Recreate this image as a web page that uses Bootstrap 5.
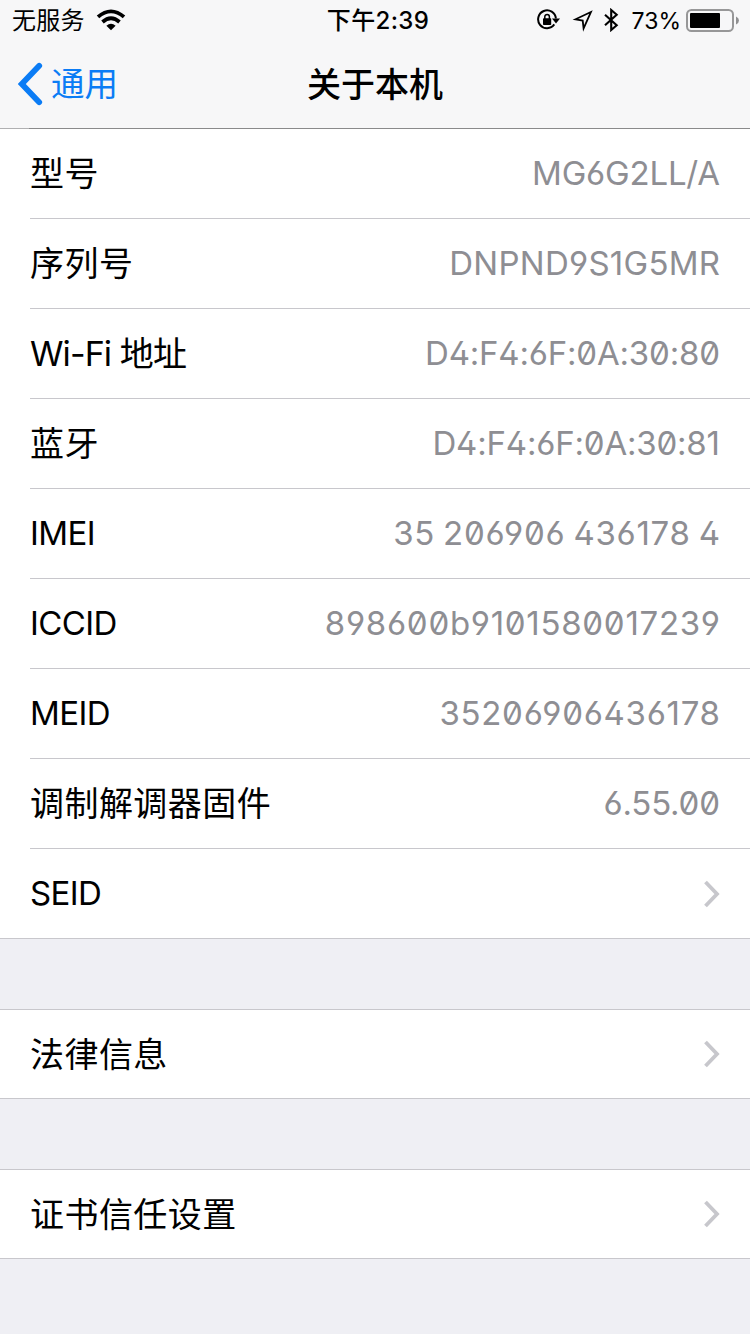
<!DOCTYPE html>
<html lang="zh-CN">
<head>
<meta charset="utf-8">
<meta name="viewport" content="width=device-width, initial-scale=1">
<title>关于本机</title>
<link href="https://cdn.jsdelivr.net/npm/bootstrap@5.3.0/dist/css/bootstrap.min.css" rel="stylesheet">
<style>
  body { background: #efeff4; color: #000; font-family: Inter, "Noto Sans CJK SC", sans-serif; overflow: hidden; }
  .top-area { height: 129px; background: #f7f7f8; border-bottom: 1px solid; border-image: linear-gradient(to right, #b0b0b2 30px, #8a8a8b 30px) 1; }
  .status-bar { height: 40px; font-size: 23px; line-height: 40px; padding: 0 11px 0 12px; }
  .side { flex: 1 1 0; }
  .carrier { font-size: 24px; padding-top: 2px; letter-spacing: .2px; }
  .wifi { margin-left: 11px; }
  .clock { font-size: 24px; letter-spacing: .35px; padding: 2px 0 0 5px; }
  .percent { margin: 1px 5px 0 11px; }
  .title-bar { height: 88px; padding: 0 17px; }
  .back-link { color: #0b7cf5; font-size: 33.5px; line-height: 1; padding-top: 6px; }
  .back-link span { margin-left: 8px; padding-top: 1px; }
  .page-title { font-size: 34px; line-height: 1; font-weight: 500; padding-top: 2px; }
  .group { background: #fff; border-bottom: 1px solid #c8c7cc; padding-left: 30px; --bs-list-group-border-radius: 0; --bs-list-group-bg: #fff; --bs-list-group-color: #000; }
  .group + .group { margin-top: 70px; border-top: 1px solid #c8c7cc; }
  .group + .group .setting { height: 88px; }
  .setting { height: 89px; border: 0; padding: 0 30px 0 0; font-size: 34px; line-height: 90px; }
  .group .setting + .setting { border-top: 1px solid #c8c7cc; height: 90px; }
  .cjk { letter-spacing: .45px; line-height: 90px; }
  .group + .group .cjk { line-height: 89px; }
  .latin { font-size: 33px; letter-spacing: -.6px; line-height: 89px; }
  .mixed { letter-spacing: -.9px; line-height: 89px; }
  .value { font-size: 33px; line-height: 89px; color: #8e8e93; font-feature-settings: "zero", "cv02", "cv03", "cv04"; letter-spacing: var(--track, 0); margin-right: calc(var(--track, 0px) * -1); white-space: nowrap; }
  .track-tight { --track: -.2px; }
  .track-serial { --track: .25px; }
  .track-imei { --track: .7px; word-spacing: -1.9px; }
  .track-digits { --track: .7px; }
  .chevron { margin-top: 30px; }
  .group + .group .chevron { margin-top: 29px; }
</style>
</head>
<body>
<header class="top-area">
  <div class="status-bar d-flex align-items-center">
    <div class="side d-flex align-items-center">
      <span class="carrier">无服务</span>
      <svg class="wifi" width="30" height="22" viewBox="0 0 30 22" fill="none" stroke="#000" stroke-width="3.8"><path d="M2 7.9Q15-3.2 28 7.9M6.5 13Q15 5.6 23.5 13"/><path d="M10.4 16.8Q15 12.6 19.6 16.8L15 21.2Z" fill="#000" stroke="none"/></svg>
    </div>
    <div class="clock fw-medium">下午2:39</div>
    <div class="side d-flex align-items-center justify-content-end">
      <svg width="84" height="24" viewBox="0 0 84 24">
        <g fill="none" stroke="#000">
          <path d="M17.3 16.4A8.9 8.9 0 1 1 18.9 10.5" stroke-width="2"/>
          <path d="M7.8 11V8.7a2.3 2.3 0 0 1 4.6 0V11" stroke-width="1.5"/>
          <path d="M53.9 4L38.5 11.3L45.7 12.6L46.6 20.4Z" stroke-width="1.8"/>
          <path d="M68 6.8L79.7 17.3L74.2 22V2L79.7 6.7L68 17.3" stroke-width="2.1"/>
        </g>
        <rect x="6" y="10.2" width="8.2" height="6.8" rx=".8"/>
        <path d="M15 10.4H23L19 15.4Z"/>
      </svg>
      <span class="percent">73%</span>
      <svg width="53" height="24" viewBox="0 0 53 24"><rect x="1" y="2" width="46" height="21" rx="4.5" fill="none" stroke="#979798" stroke-width="2"/><rect x="4" y="5" width="30" height="15" rx="1"/><path d="M50 8.5Q53 10 53 12.5T50 16.5Z" fill="#8f8f90"/></svg>
    </div>
  </div>
  <nav class="title-bar d-flex align-items-center">
    <div class="side">
      <a class="back-link text-decoration-none d-inline-flex align-items-center" href="#">
        <svg width="26" height="44" viewBox="0 0 26 44" fill="none" stroke="currentColor" stroke-width="5.8" stroke-linecap="round"><path d="M22.2 3.8L4.8 22L22.2 40.2"/></svg>
        <span>通用</span></a>
    </div>
    <h1 class="page-title m-0">关于本机</h1>
    <div class="side"></div>
  </nav>
</header>
<main>
  <section class="group list-group">
    <div class="setting list-group-item d-flex justify-content-between"><span class="cjk">型号</span><span class="value track-tight">MG6G2LL/A</span></div>
    <div class="setting list-group-item d-flex justify-content-between"><span class="cjk">序列号</span><span class="value track-serial">DNPND9S1G5MR</span></div>
    <div class="setting list-group-item d-flex justify-content-between"><span class="mixed">Wi-Fi 地址</span><span class="value track-tight">D4:F4:6F:0A:30:80</span></div>
    <div class="setting list-group-item d-flex justify-content-between"><span class="cjk">蓝牙</span><span class="value track-tight">D4:F4:6F:0A:30:81</span></div>
    <div class="setting list-group-item d-flex justify-content-between"><span class="latin">IMEI</span><span class="value track-imei">35 206906 436178 4</span></div>
    <div class="setting list-group-item d-flex justify-content-between"><span class="latin">ICCID</span><span class="value track-digits">898600b9101580017239</span></div>
    <div class="setting list-group-item d-flex justify-content-between"><span class="latin">MEID</span><span class="value track-digits">35206906436178</span></div>
    <div class="setting list-group-item d-flex justify-content-between"><span class="cjk">调制解调器固件</span><span class="value track-tight">6.55.00</span></div>
    <div class="setting list-group-item d-flex justify-content-between"><span class="latin">SEID</span>
      <svg class="chevron" width="16" height="30" viewBox="0 0 16 30" fill="none" stroke="#c7c7cc" stroke-width="3.8"><path d="M1.5 3L13 15L1.5 27"/></svg></div>
  </section>
  <section class="group list-group">
    <div class="setting list-group-item d-flex justify-content-between"><span class="cjk">法律信息</span>
      <svg class="chevron" width="16" height="30" viewBox="0 0 16 30" fill="none" stroke="#c7c7cc" stroke-width="3.8"><path d="M1.5 3L13 15L1.5 27"/></svg></div>
  </section>
  <section class="group list-group">
    <div class="setting list-group-item d-flex justify-content-between"><span class="cjk">证书信任设置</span>
      <svg class="chevron" width="16" height="30" viewBox="0 0 16 30" fill="none" stroke="#c7c7cc" stroke-width="3.8"><path d="M1.5 3L13 15L1.5 27"/></svg></div>
  </section>
</main>
<script src="https://cdn.jsdelivr.net/npm/bootstrap@5.3.0/dist/js/bootstrap.bundle.min.js"></script>
</body>
</html>
